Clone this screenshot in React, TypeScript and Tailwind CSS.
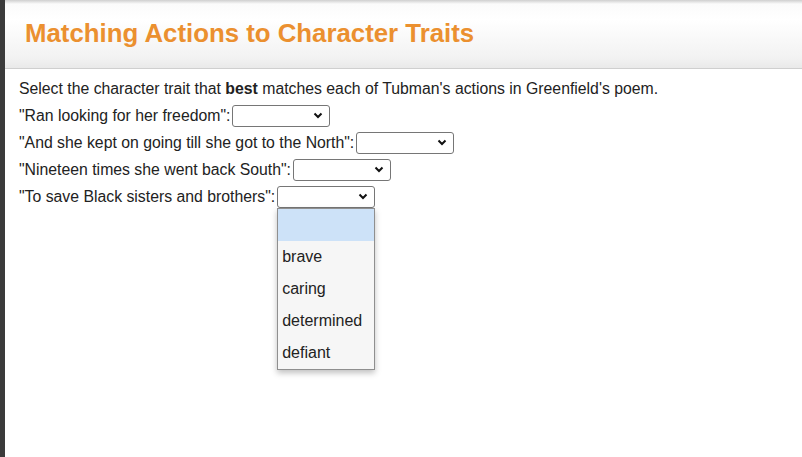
import React from 'react';

const rows = [
  { label: '"Ran looking for her freedom":' },
  { label: '"And she kept on going till she got to the North":' },
  { label: '"Nineteen times she went back South":' },
  { label: '"To save Black sisters and brothers":', open: true },
];

const options = ['brave', 'caring', 'determined', 'defiant'];

const Chevron = () => (
  <svg width="10" height="7" viewBox="0 0 10 7" className="shrink-0">
    <path d="M1.5 1.5 L5 5 L8.5 1.5" fill="none" stroke="#111" strokeWidth="2" />
  </svg>
);

const FakeSelect: React.FC<{ open?: boolean }> = ({ open }) => (
  <div className="relative ml-[2px] inline-flex">
    <div className="flex h-[22px] w-[98px] items-center justify-end rounded-[3px] border border-[#767676] bg-white pr-[6px]">
      <Chevron />
    </div>
    {open && (
      <div className="absolute left-0 top-[22px] z-10 w-[98px] border border-[#8f8f8f] bg-[#f6f6f6] shadow-[0_3px_6px_rgba(0,0,0,0.25)]">
        <div className="h-[32px] bg-[#cde2f8]" />
        {options.map((o) => (
          <div key={o} className="flex h-[32px] items-center pl-[4px] text-[16px] text-[#222]">
            {o}
          </div>
        ))}
      </div>
    )}
  </div>
);

const App: React.FC = () => {
  return (
    <div className="flex h-[457px] w-[802px] overflow-hidden bg-white font-['Liberation_Sans',Arial,sans-serif]">
      <div className="w-[5px] shrink-0 bg-[#3b3b3b]" />
      <div className="flex-1">
        <div className="h-[69px] border-b border-[#cfcfcf] bg-[linear-gradient(to_bottom,#cfcfcf_0px,#fbfbfb_4px,#ffffff_20px,#f2f2f2_58px,#e9e9e9_68px)] pl-[20px] pt-[17px]">
          <h1 className="text-[25.8px] font-bold leading-[32px] text-[#eb902f]">Matching Actions to Character Traits</h1>
        </div>
        <div className="pl-[14px] pt-[6px] text-[15.8px] leading-[27px] text-[#222]">
          <p>
            Select the character trait that <b>best</b> matches each of Tubman's actions in Greenfield's poem.
          </p>
          {rows.map((r) => (
            <div key={r.label} className="flex h-[27px] items-center">
              <span>{r.label}</span>
              <FakeSelect open={r.open} />
            </div>
          ))}
        </div>
      </div>
    </div>
  );
};

export default App;
